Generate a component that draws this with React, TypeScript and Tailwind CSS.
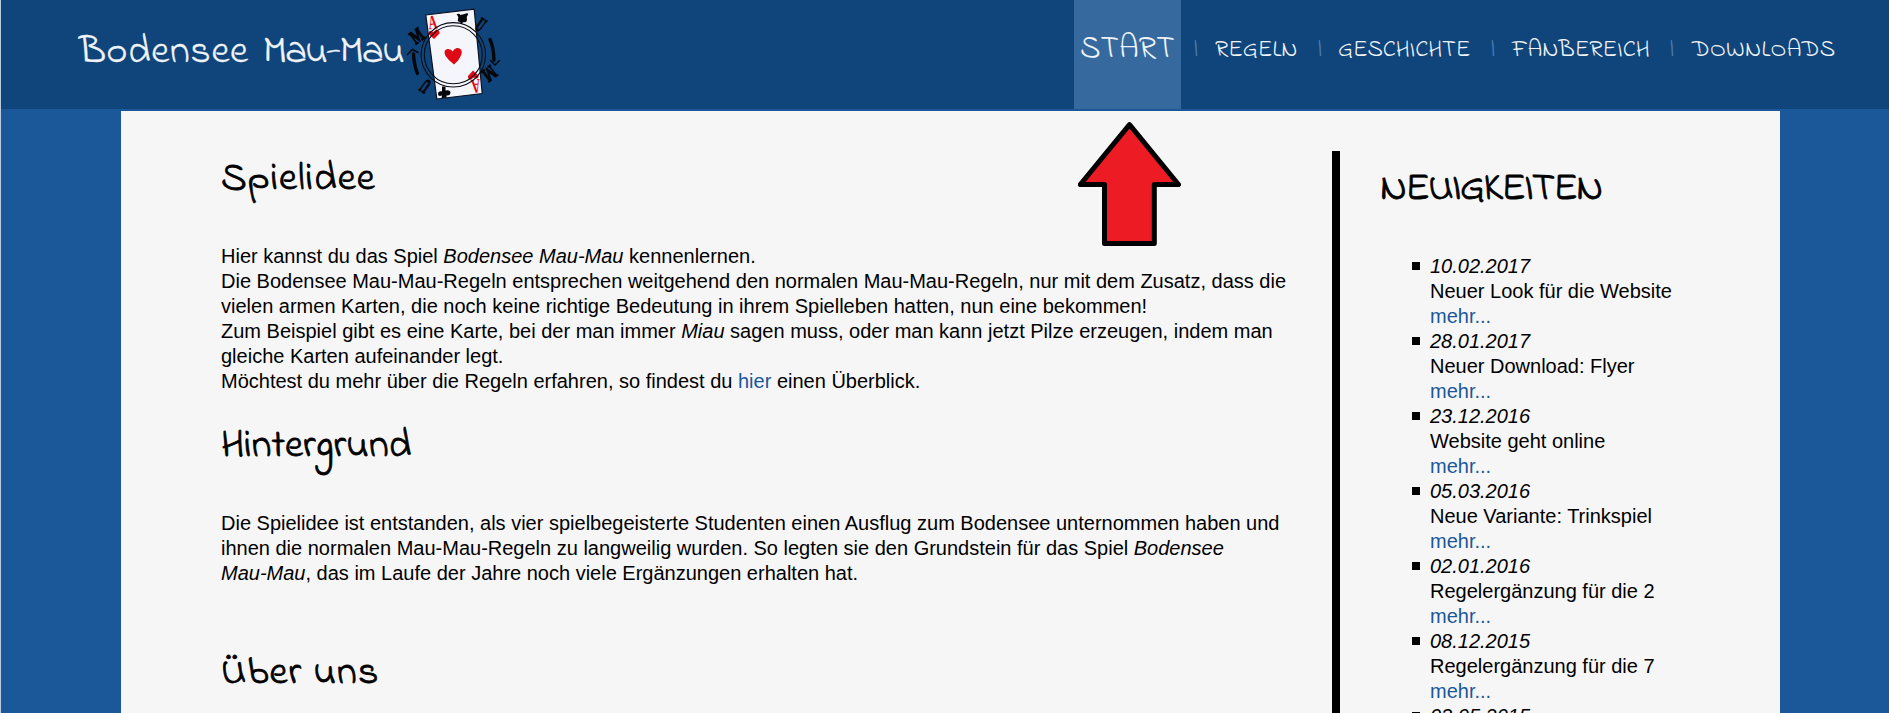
const news = [
  { date: "10.02.2017", text: "Neuer Look für die Website" },
  { date: "28.01.2017", text: "Neuer Download: Flyer" },
  { date: "23.12.2016", text: "Website geht online" },
  { date: "05.03.2016", text: "Neue Variante: Trinkspiel" },
  { date: "02.01.2016", text: "Regelergänzung für die 2" },
  { date: "08.12.2015", text: "Regelergänzung für die 7" },
  { date: "03.05.2015", text: "" },
];

const navItems = [
  { label: "REGELN", sep: "w-[21px] ml-[13px]", box: "w-[83px]", text: "" },
  { label: "GESCHICHTE", sep: "w-[20px] ml-[20px]", box: "w-[133px]", text: "tracking-[-0.1px]" },
  { label: "FANBEREICH", sep: "w-[21px] ml-[20px]", box: "w-[138px]", text: "" },
  { label: "DOWNLOADS", sep: "w-[22px] ml-[20px]", box: "w-[144px]", text: "tracking-[0.3px]" },
];

function Logo() {
  return (
    <svg viewBox="0 0 110 109" className="h-[109px] w-[110px] shrink-0" aria-hidden="true">
      <polygon points="25.8,15 74.2,9.2 82.2,93.5 36.8,99" fill="#f5f6fb" stroke="#0b1220" strokeWidth="1.2" strokeLinejoin="round" />
      <g fill="#e30a17" fontFamily="'Liberation Serif', serif" fontWeight="bold" fontSize="20">
        <text x="-7.2" y="7" transform="translate(32.5 22) rotate(-7) scale(.62 1)">A</text>
        <text x="-7.2" y="7" transform="translate(76 86.5) rotate(173) scale(.62 1)">A</text>
      </g>
      <path d="M34 39 L28.5 34 Q28 30.5 31.5 31 L33.5 32 L36 29.5 Q40 30 39.5 33.5 Z" fill="#e30a17" />
      <path d="M73 70.5 L78.5 75.5 Q79 79 75.5 78.5 L73.5 77.5 L71 79.8 Q67.5 79.5 68 76 Z" fill="#e30a17" />
      <path d="M56.5 14.5 Q59 13 60.5 15 L64.5 14 Q67.5 12.5 68.3 14 Q65.8 17 67 20 Q66.5 23 63.5 22 L61.5 24 L60 22 Q57 21.5 58 19 Q59 16.5 56.5 14.5 Z" fill="#05070b" />
      <path d="M42 86.5 L45.5 86.5 L45.5 90.5 Q50.5 89.5 50.5 93 Q50 96 46.5 95.5 L46.5 97.8 L41.5 98 L42 95.5 Q38 97 38 93.8 Q38.2 90.5 42 91.3 Z" fill="#05070b" />
      <circle cx="53.3" cy="54.8" r="32.2" fill="none" stroke="#080c14" strokeWidth="1.1" />
      <circle cx="53.3" cy="54.8" r="29" fill="none" stroke="#080c14" strokeWidth="1.1" />
      <path d="M54 64.5 Q48 60 45.3 55.5 Q43 49.8 47.5 49 Q51 48.6 52.8 51.5 Q54.5 47.8 58 48 Q62.8 48.8 61.5 54 Q59.5 60 54 64.5 Z" fill="#dd0914" />
      <g fill="#05070b" stroke="#05070b" strokeWidth="1.1" fontFamily="'Liberation Serif', serif" fontWeight="bold" fontSize="17" textAnchor="middle">
        <text y="5.5" transform="translate(17 36) rotate(-36) scale(.78 1.15)">M</text>
        <text y="5.5" transform="translate(80.5 25) rotate(35) scale(.6 1.2)">U</text>
        <text y="5.5" transform="translate(89.5 73.5) rotate(142) scale(.78 1.15)">M</text>
        <text y="5.5" transform="translate(25.5 86) rotate(215) scale(.6 1.2)">U</text>
      </g>
      <g fill="none" stroke="#05070b" strokeLinecap="round">
        <path d="M13.5 54 Q14 65 17.5 73.5" strokeWidth="3.4" />
        <path d="M7.5 54.5 L12.5 49.5 L18 52.5" strokeWidth="1.5" />
        <path d="M90 39.5 Q93.5 47 94 60" strokeWidth="3.4" />
        <path d="M90.5 60.5 L95 65 L99.5 60.5" strokeWidth="1.5" />
      </g>
    </svg>
  );
}

function Heading({ children, className }: { children: string; className: string }) {
  return (
    <h2
      className={`font-['Indie_Flower',cursive] text-[40px] leading-10 whitespace-nowrap [-webkit-text-stroke:0.8px_#000] ${className}`}
    >
      {children}
    </h2>
  );
}

export default function App() {
  return (
    <div className="relative h-[713px] overflow-hidden border-l border-[#b9cbe0] bg-[#1a589a] font-['Liberation_Sans',Arial,sans-serif] text-[20px] leading-[25px] text-black">
      <header className="flex h-[111px] border-b-2 border-[#1a589a] bg-[#10457b] font-['Indie_Flower',cursive] text-[#f0f4f8]">
        <div className="flex flex-1">
          <div className="ml-[78px] w-[321px] shrink-0 pt-[33px] text-[40px] leading-10 whitespace-nowrap [-webkit-text-stroke:0.3px_#f0f4f8]">
            <span className="tracking-[0.7px]">Bodensee</span>
            <span className="tracking-[4px]"> </span>
            <span className="tracking-[-1.7px]">Mau-Mau</span>
          </div>
          <Logo />
        </div>
        <nav className="flex w-[815px] shrink-0">
          <a className="h-[109px] w-[107px] bg-[#366a9f] pl-[6px] text-[32px] leading-[99px]">START</a>
          {navItems.map((item) => (
            <div key={item.label} className="flex text-[24px] leading-[101px] whitespace-nowrap">
              <span className={`text-[#4a7cae] ${item.sep}`}>|</span>
              <a className={`${item.box} ${item.text}`}>{item.label}</a>
            </div>
          ))}
        </nav>
      </header>

      <div className="ml-[120px] flex h-[602px] w-[1659px] bg-[#f6f6f6]">
        <main className="w-[1211px] pl-[100px]">
          <Heading className="mt-[49px] tracking-[1.1px]">Spielidee</Heading>
          <p className="mt-[44px] w-[1080px]">
            Hier kannst du das Spiel <i>Bodensee Mau-Mau</i> kennenlernen.
            <br />
            Die Bodensee Mau-Mau-Regeln entsprechen weitgehend den normalen Mau-Mau-Regeln, nur mit dem Zusatz, dass die
            vielen armen Karten, die noch keine richtige Bedeutung in ihrem Spielleben hatten, nun eine bekommen!
            <br />
            Zum Beispiel gibt es eine Karte, bei der man immer <i>Miau</i> sagen muss, oder man kann jetzt Pilze
            erzeugen, indem man gleiche Karten aufeinander legt.
            <br />
            Möchtest du mehr über die Regeln erfahren, so findest du <a className="text-[#1a589a]">hier</a> einen
            Überblick.
          </p>
          <Heading className="mt-[33px] tracking-[0.1px]">Hintergrund</Heading>
          <p className="mt-[44px] w-[1080px]">
            Die Spielidee ist entstanden, als vier spielbegeisterte Studenten einen Ausflug zum Bodensee unternommen
            haben und ihnen die normalen Mau-Mau-Regeln zu langweilig wurden. So legten sie den Grundstein für das Spiel{" "}
            <i>
              Bodensee
              <br />
              Mau-Mau
            </i>
            , das im Laufe der Jahre noch viele Ergänzungen erhalten hat.
          </p>
          <Heading className="mt-[68px] tracking-[1.1px]">Über uns</Heading>
        </main>

        <aside className="mt-10 h-[562px] flex-1 overflow-hidden border-l-8 border-black">
          <Heading className="mt-[19px] ml-10 tracking-[-1.5px]">NEUIGKEITEN</Heading>
          <ul className="mt-[44px] ml-[72px]">
            {news.map((n) => (
              <li key={n.date} className="flex">
                <span className="mt-2 mr-[10px] size-2 shrink-0 bg-black" />
                <div>
                  <i>{n.date}</i>
                  {n.text && (
                    <>
                      <div>{n.text}</div>
                      <a className="text-[#1a589a]">mehr...</a>
                    </>
                  )}
                </div>
              </li>
            ))}
          </ul>
        </aside>
      </div>

      <svg viewBox="0 0 104 126" className="absolute top-[121px] left-[1077px] h-[126px] w-[104px]" aria-hidden="true">
        <path d="M51.5 3.7 L100.5 63.5 H76.3 V122.5 H26.5 V63.5 H2.3 Z" fill="#ed1c24" stroke="#000" strokeWidth="5" strokeLinejoin="round" />
      </svg>
    </div>
  );
}
